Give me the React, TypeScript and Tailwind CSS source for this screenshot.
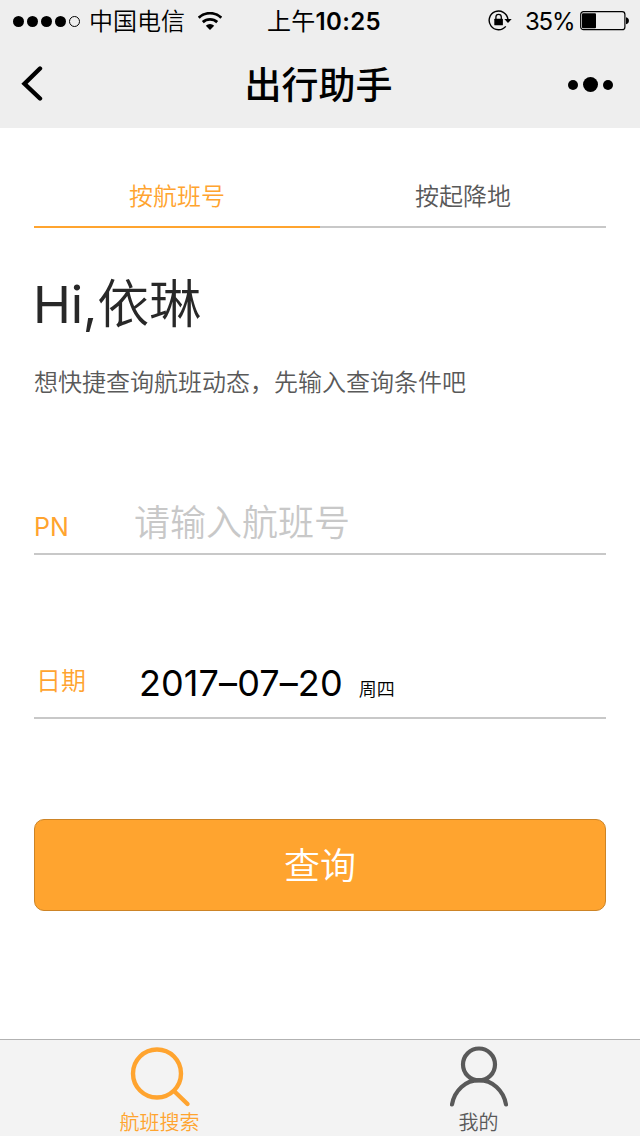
import { useState } from 'react';

const tabs = [
  { id: 'flight', label: '按航班号' },
  { id: 'route', label: '按起降地' },
];

function WifiIcon() {
  return (
    <svg width="24" height="19" viewBox="0 0 24 19" fill="none" stroke="#000" strokeWidth="2.8">
      <path d="M0.7 5.7a16.5 16.5 0 0 1 22.6 0" />
      <path d="M4.8 10.1a10.6 10.6 0 0 1 14.4 0" />
      <path d="M7.8 13.7a6.2 6.2 0 0 1 8.4 0L12 17.9z" fill="#000" stroke="none" />
    </svg>
  );
}

function RotationLockIcon() {
  return (
    <svg width="24" height="22" viewBox="0 0 24 22" fill="none" stroke="#000">
      <path d="M17.8 16.4A9.4 9.4 0 1 1 19.9 9.2" strokeWidth="1.4" />
      <path d="M16.3 9h7.4l-3.7 4z" fill="#000" stroke="none" />
      <path d="M7.9 9.4V7a2.7 2.7 0 0 1 5.4 0v2.4" strokeWidth="1.3" />
      <rect x="6.3" y="8.7" width="8.6" height="6.6" rx="0.5" fill="#000" stroke="none" />
    </svg>
  );
}

function BatteryIcon() {
  return (
    <svg width="50" height="20" viewBox="0 0 50 20" fill="none">
      <rect x="0.7" y="0.7" width="44.2" height="18" rx="2.8" stroke="#000" strokeWidth="1.2" />
      <rect x="2" y="2.2" width="14" height="15" rx="1" fill="#000" />
      <path d="M46 6.2c3.9 0.4 3.9 6.6 0 7z" fill="#000" />
    </svg>
  );
}

function StatusBar() {
  return (
    <div className="grid h-10 grid-cols-[267px_1fr_152px] items-center text-black">
      <div className="flex items-center pl-[13px]">
        <div className="flex gap-[3px]">
          <span className="size-[11px] rounded-full bg-black" />
          <span className="size-[11px] rounded-full bg-black" />
          <span className="size-[11px] rounded-full bg-black" />
          <span className="size-[11px] rounded-full bg-black" />
          <span className="size-[11px] rounded-full border border-black" />
        </div>
        <span className="ml-[9px] w-[97px] shrink-0 pt-0.5 text-[24px] font-[350] leading-10">中国电信</span>
        <span className="ml-3 shrink-0">
          <WifiIcon />
        </span>
      </div>
      <span className="whitespace-nowrap pt-0.5 text-[24px] leading-10 tracking-[0.3px]">
        上午<span className="font-semibold">10:25</span>
      </span>
      <div className="flex items-center">
        <RotationLockIcon />
        <span className="ml-[13px] w-[55px] pt-0.5 text-[24px] leading-10 tracking-[-1.2px]">35%</span>
        <BatteryIcon />
      </div>
    </div>
  );
}

function NavBar() {
  return (
    <div className="grid h-22 grid-cols-3 items-center px-5">
      <button aria-label="返回">
        <svg width="24" height="36" viewBox="0 0 24 36" fill="none" stroke="#000" strokeWidth="4.4" strokeLinecap="round">
          <path d="M20 2.5L4.5 17.8l15.5 14.7" />
        </svg>
      </button>
      <h1 className="pt-0.5 pr-[3px] text-center text-[37px] font-medium leading-none text-black">出行助手</h1>
      <button className="flex items-center justify-end gap-[5px] pt-px pr-[7px]" aria-label="更多">
        <span className="size-2.5 rounded-full bg-black" />
        <span className="size-[15px] rounded-full bg-black" />
        <span className="size-2.5 rounded-full bg-black" />
      </button>
    </div>
  );
}

export default function App() {
  const [activeTab, setActiveTab] = useState('flight');
  const [flightNo, setFlightNo] = useState('');

  return (
    <div className="flex h-[1136px] w-[640px] flex-col overflow-hidden bg-white font-['Inter','Noto_Sans_CJK_SC',sans-serif]">
      <header className="bg-[#eeeeee]">
        <StatusBar />
        <NavBar />
      </header>

      <main className="flex-1 px-[34px] pt-9">
        {/* Search mode */}
        <div className="flex">
          {tabs.map((tab) => (
            <button
              key={tab.id}
              onClick={() => setActiveTab(tab.id)}
              className={`h-16 w-1/2 border-b-2 pt-1 text-[24px] font-[350] leading-[58px] ${
                activeTab === tab.id ? 'border-[#ffa42f] text-[#ffa42f]' : 'border-[#c8c8c8] text-[#595959]'
              }`}
            >
              {tab.label}
            </button>
          ))}
        </div>

        {/* Greeting */}
        <h2 className="mt-[37px] text-[52px] font-[350] leading-20 text-[#282828]">
          <span className="-ml-px text-[51px] font-normal tracking-[-0.2px]">Hi,</span>依琳
        </h2>
        <p className="mt-[18px] text-[24px] font-[350] leading-10 text-[#595959]">想快捷查询航班动态，先输入查询条件吧</p>

        {/* Form */}
        <label className="mt-[82px] flex h-[70px] items-center border-b-2 border-[#c8c8c8]">
          <span className="w-[100px] pt-[18px] text-[25px] text-[#ffa42f]">PN</span>
          <input
            value={flightNo}
            onChange={(e) => setFlightNo(e.target.value)}
            placeholder="请输入航班号"
            className="w-[400px] pt-[7px] text-[36px] font-[350] leading-[54px] outline-none placeholder:text-[#c8c8c8]"
          />
        </label>
        <div className="mt-[94px] flex h-[70px] items-center border-b-2 border-[#c8c8c8]">
          <span className="w-[105px] pb-0.5 pl-0.5 text-[25px] font-[350] text-[#ffa42f]">日期</span>
          <span className="text-[36px] leading-[54px] tracking-[0.1px] text-black">2017–07–20</span>
          <span className="ml-4 pt-3 text-[18px] font-[350] text-black">周四</span>
        </div>

        <button className="mt-[100px] h-[92px] w-full rounded-[10px] border border-[#cd8426] bg-[#ffa42f] pt-0.5 text-[36px] font-[350] text-white">
          查询
        </button>
      </main>

      <nav className="grid h-[97px] grid-cols-2 border-t border-[#b2b2b2] bg-[#f3f3f3] pr-0.5 text-[20px] font-[350] leading-6">
        <a className="flex flex-col items-center gap-px pt-1.5 text-[#ffa42f]">
          <svg width="64" height="64" viewBox="0 0 64 64" fill="none" stroke="currentColor" strokeWidth="4.4" strokeLinecap="round">
            <circle cx="29" cy="27.5" r="24" />
            <path d="M46 45l13.5 13" />
          </svg>
          航班搜索
        </a>
        <a className="flex flex-col items-center gap-px pt-1.5 text-[#595959]">
          <svg width="64" height="64" viewBox="0 0 64 64" fill="none" stroke="currentColor" strokeWidth="4.2" strokeLinecap="round">
            <circle cx="32" cy="18.5" r="16" />
            <path d="M5 58.5A27.5 30 0 0 1 59 58.5" />
          </svg>
          我的
        </a>
      </nav>
    </div>
  );
}
